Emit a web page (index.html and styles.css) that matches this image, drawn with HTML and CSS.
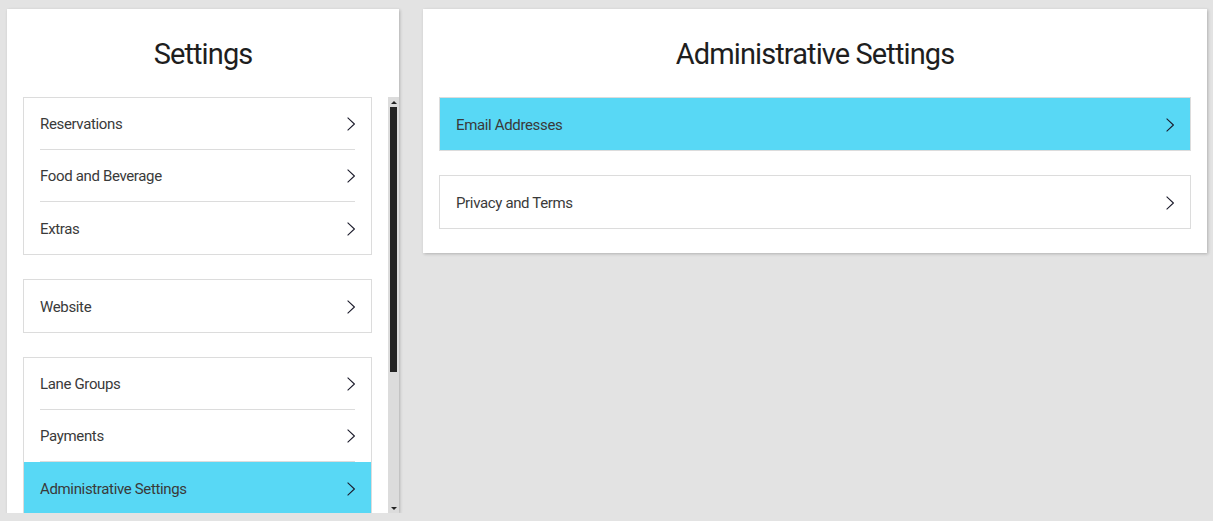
FILE: index.html
```html
<!DOCTYPE html>
<html lang="en">
<head>
<meta charset="utf-8">
<title>Settings</title>
<link rel="stylesheet" href="styles.css">
</head>
<body>
<div class="page">
  <section class="panel panel-nav">
    <header class="panel-header"><h1 class="panel-title">Settings</h1></header>
    <div class="scroll-wrap">
      <div class="scroll-content">
        <ul class="group">
          <li class="row"><div class="row-inner"><span>Reservations</span><svg class="chev" viewBox="0 0 8 14"><polyline points="0.6,0.6 7.4,7 0.6,13.4"/></svg></div></li>
          <li class="row"><div class="row-inner"><span>Food and Beverage</span><svg class="chev" viewBox="0 0 8 14"><polyline points="0.6,0.6 7.4,7 0.6,13.4"/></svg></div></li>
          <li class="row"><div class="row-inner"><span>Extras</span><svg class="chev" viewBox="0 0 8 14"><polyline points="0.6,0.6 7.4,7 0.6,13.4"/></svg></div></li>
        </ul>
        <ul class="group">
          <li class="row"><div class="row-inner"><span>Website</span><svg class="chev" viewBox="0 0 8 14"><polyline points="0.6,0.6 7.4,7 0.6,13.4"/></svg></div></li>
        </ul>
        <ul class="group">
          <li class="row"><div class="row-inner"><span>Lane Groups</span><svg class="chev" viewBox="0 0 8 14"><polyline points="0.6,0.6 7.4,7 0.6,13.4"/></svg></div></li>
          <li class="row"><div class="row-inner"><span>Payments</span><svg class="chev" viewBox="0 0 8 14"><polyline points="0.6,0.6 7.4,7 0.6,13.4"/></svg></div></li>
          <li class="row row-active"><div class="row-inner"><span>Administrative Settings</span><svg class="chev" viewBox="0 0 8 14"><polyline points="0.6,0.6 7.4,7 0.6,13.4"/></svg></div></li>
        </ul>
      </div>
      <div class="scrollbar">
        <div class="sb-btn"><span class="arrow-up"></span></div>
        <div class="sb-track"><div class="sb-thumb"></div></div>
        <div class="sb-btn"><span class="arrow-down"></span></div>
      </div>
    </div>
  </section>
  <section class="panel panel-detail">
    <header class="panel-header"><h1 class="panel-title">Administrative Settings</h1></header>
    <div class="detail-list">
      <div class="link-box link-active"><span>Email Addresses</span><svg class="chev" viewBox="0 0 8 14"><polyline points="0.6,0.6 7.4,7 0.6,13.4"/></svg></div>
      <div class="link-box"><span>Privacy and Terms</span><svg class="chev" viewBox="0 0 8 14"><polyline points="0.6,0.6 7.4,7 0.6,13.4"/></svg></div>
    </div>
  </section>
</div>
</body>
</html>
```
FILE: styles.css
```css
* { box-sizing: border-box; }
html, body { margin: 0; padding: 0; }
body {
  background: #e3e3e3;
  font-family: "Roboto", "Liberation Sans", sans-serif;
  color: #3a3a3a;
  font-size: 15px;
  letter-spacing: -0.35px;
}
.page {
  display: flex;
  align-items: flex-start;
  gap: 24px;
  padding: 9px 6px 0 7px;
}
.panel {
  background: #fff;
  box-shadow: 1px 1px 3px rgba(0, 0, 0, 0.22);
}
.panel-nav {
  width: 392px;
  height: 504px;
  display: flex;
  flex-direction: column;
}
.panel-detail {
  width: 784px;
  padding-bottom: 24px;
}
.panel-header {
  padding: 24px 0;
}
.panel-title {
  margin: 0;
  height: 40px;
  line-height: 42px;
  text-align: center;
  font-size: 29px;
  letter-spacing: -0.9px;
  font-weight: 400;
  color: #1e1e1e;
}
.scroll-wrap {
  flex: 1;
  display: flex;
  min-height: 0;
}
.scroll-content {
  flex: 1;
  overflow: hidden;
  padding: 0 16px;
}
.group {
  list-style: none;
  margin: 0 0 24px;
  padding: 0;
  border: 1px solid #dcdcdc;
}
.row {
  padding: 0 16px;
}
.row-inner {
  height: 52px;
  display: flex;
  align-items: center;
  justify-content: space-between;
  border-bottom: 1px solid #dcdcdc;
  padding-top: 1px;
}
.row:last-child .row-inner { border-bottom: none; }
.row-active { background: #58d8f5; }
.row-active .row-inner { border-bottom-color: transparent; }
.chev {
  width: 8px;
  height: 14px;
  fill: none;
  stroke: #1c1c2c;
  stroke-width: 1.1;
  flex: none;
}
.scrollbar {
  width: 11px;
  flex: none;
  background: #dcdcdc;
  display: flex;
  flex-direction: column;
}
.sb-btn {
  height: 10px;
  display: flex;
  align-items: center;
  justify-content: center;
}
.arrow-up, .arrow-down {
  width: 0;
  height: 0;
  border-left: 3px solid transparent;
  border-right: 3px solid transparent;
}
.arrow-up { border-bottom: 3px solid #222; }
.arrow-down { border-top: 3px solid #222; }
.sb-track {
  flex: 1;
  padding: 0 2px;
}
.sb-thumb {
  height: 265px;
  background: #242424;
}
.detail-list {
  display: flex;
  flex-direction: column;
  gap: 24px;
  padding: 0 16px;
}
.link-box {
  height: 54px;
  border: 1px solid #dcdcdc;
  padding: 1px 16px 0;
  display: flex;
  align-items: center;
  justify-content: space-between;
}
.link-active { background: #58d8f5; }
```
